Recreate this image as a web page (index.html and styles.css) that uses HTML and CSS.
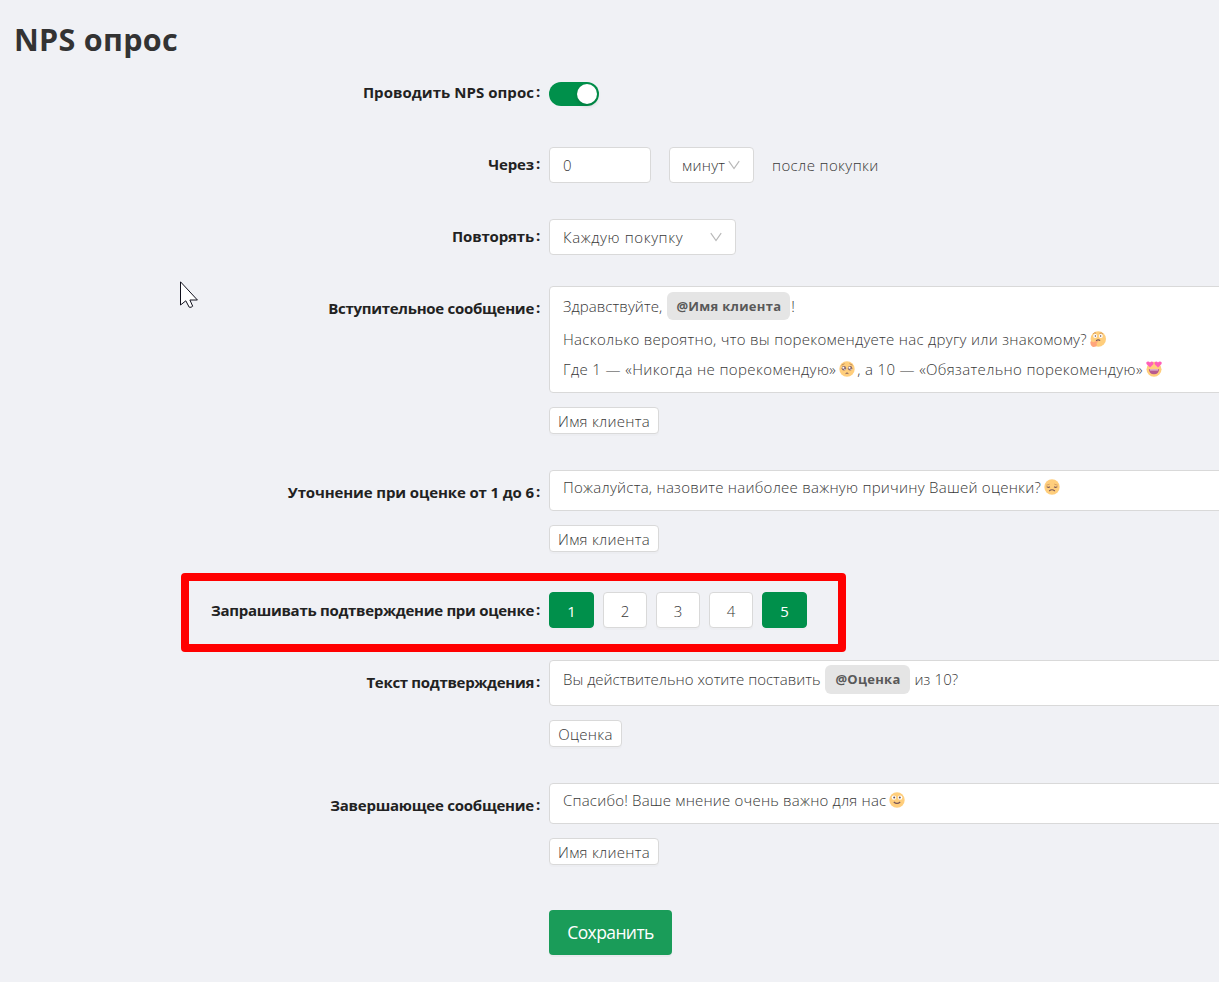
FILE: index.html
```
<!DOCTYPE html>
<html lang="ru">
<head>
  <meta charset="UTF-8" />
  <meta name="viewport" content="width=device-width, initial-scale=1" />
  <title>NPS опрос</title>
  <link rel="stylesheet" href="styles.css">
</head>
<body>

  <svg class="sprite" width="0" height="0">
    <symbol id="arrow" viewBox="0 0 12 10">
      <path d="M.8 1.200L6 8.500l5.200-7.300" fill="none" stroke="#b8b8b8" stroke-width="1.200"/>
    </symbol>
    <symbol id="thinking" viewBox="0 0 16 16">
      <circle cx="8.300" cy="8" r="7.700" fill="#ffce7c"/>
      <path d="M3.200 2.700Q4.500 1.300 6 2.100M9.500 2.300q2-1 3.500.8" fill="none" stroke="#c98a50" stroke-width=".8"/>
      <circle cx="5.200" cy="5" r="2" fill="#fff"/><circle cx="10.800" cy="5" r="2" fill="#fff"/>
      <circle cx="5.400" cy="5" r=".8" fill="#664e54"/><circle cx="10.600" cy="5" r=".8" fill="#664e54"/>
      <path d="M6 9.800q2-1.700 4.200-.3" fill="none" stroke="#765458" stroke-width="1.100"/>
      <path d="M.3 11.500q.2-2 1.800-1l1 .8 4.300-1.500q1.300.1.500 1.200l-1.400 1q1.500 3.500-2.600 4-3.200-.2-3.600-4.500z" fill="#ffa57c"/>
    </symbol>
    <symbol id="pleading" viewBox="0 0 16 16">
      <circle cx="8" cy="8" r="7.700" fill="#ffce7c"/>
      <path d="M2.500 4.200l3-1.500M10.500 2.700l3 1.500" stroke="#b88255" stroke-width=".9"/>
      <circle cx="4.900" cy="7.300" r="2.200" fill="#8a686a"/><circle cx="11.100" cy="7.300" r="2.200" fill="#8a686a"/>
      <circle cx="4.300" cy="6.700" r="1" fill="#fff"/><circle cx="10.500" cy="6.700" r="1" fill="#fff"/>
      <circle cx="5.900" cy="8.300" r=".6" fill="#fff"/><circle cx="12.100" cy="8.300" r=".6" fill="#fff"/>
      <path d="M6.600 12.600q1.400-1.300 2.800 0" fill="none" stroke="#765458"/>
    </symbol>
    <symbol id="hearts" viewBox="0 0 16 16">
      <circle cx="8" cy="8.200" r="7.500" fill="#ffce7c"/>
      <path d="M4 6.500L.5 3Q-.3.600 1.800.4 3.200.2 4 1.600 5.200.2 6.600.7q1.500 1 .5 2.700zM12 6.500L8.900 3.400q-1-1.700.5-2.700 1.400-.5 2.600.9.800-1.400 2.200-1.200 2.100.2 1.300 2.600z" fill="#ff5fb8"/>
      <path d="M2.800 8.300h10.400q-.4 4.900-5.200 5-4.800-.1-5.200-5z" fill="#b85a8e"/>
      <path d="M4 8.300h8v1.200H4z" fill="#e7c6df"/>
    </symbol>
    <symbol id="sad" viewBox="0 0 16 16">
      <circle cx="8" cy="8" r="7.700" fill="#ffce7c"/>
      <path d="M2.300 6.200l3.400-1M10.300 5.200l3.400 1" stroke="#c48c58" stroke-width=".7"/>
      <path d="M2.700 7.700q1.500 1.300 3.200 0M10.100 7.700q1.700 1.300 3.200 0M5.200 12q2.800-2.400 5.600 0" fill="none" stroke="#765458" stroke-width="1.100"/>
    </symbol>
    <symbol id="smile" viewBox="0 0 16 16">
      <circle cx="8" cy="8" r="7.700" fill="#ffce7c"/>
      <circle cx="4.900" cy="5.600" r="2.200" fill="#fff"/><circle cx="11.100" cy="5.600" r="2.200" fill="#fff"/>
      <circle cx="5.200" cy="5.600" r="1" fill="#664e54"/><circle cx="10.800" cy="5.600" r="1" fill="#664e54"/>
      <path d="M4.800 10q3.200 2.700 6.400 0" fill="none" stroke="#765458" stroke-width="1.200"/>
    </symbol>
  </svg>

  <h1>NPS опрос</h1>

  <form class="nps-form">
    <div class="row">
      <div class="label"><span class="l1">Проводить NPS опрос</span></div>
      <div class="control"><div class="switch"></div></div>
    </div>

    <div class="row">
      <div class="label"><span class="l2">Через</span></div>
      <div class="control">
        <div class="input delay">0</div>
        <div class="input unit"><span>минут</span><svg class="arrow"><use href="#arrow"/></svg></div>
        <span class="after">после покупки</span>
      </div>
    </div>

    <div class="row">
      <div class="label"><span class="l3">Повторять</span></div>
      <div class="control">
        <div class="input repeat"><span>Каждую покупку</span><svg class="arrow"><use href="#arrow"/></svg></div>
      </div>
    </div>

    <div class="row message intro">
      <div class="label"><span class="l4">Вступительное сообщение</span></div>
      <div class="field">
        <div class="editor">
          <p class="with-tag first"><span class="t1">Здравствуйте,</span><b class="mention name">@Имя клиента</b><span>!</span></p>
          <p><span class="t2">Насколько вероятно, что вы порекомендуете нас другу или знакомому?</span><svg class="emoji"><use href="#thinking"/></svg></p>
          <p><span class="t3">Где 1 — «Никогда не порекомендую»</span><svg class="emoji"><use href="#pleading"/></svg><span class="t4">, а 10 — «Обязательно порекомендую»</span><svg class="emoji"><use href="#hearts"/></svg></p>
        </div>
        <div class="tag">Имя клиента</div>
      </div>
    </div>

    <div class="row message">
      <div class="label"><span class="l5">Уточнение при оценке от 1 до 6</span></div>
      <div class="field">
        <div class="editor single">
          <p><span class="t5">Пожалуйста, назовите наиболее важную причину Вашей оценки?</span><svg class="emoji"><use href="#sad"/></svg></p>
        </div>
        <div class="tag">Имя клиента</div>
      </div>
    </div>

    <div class="row scores">
      <div class="label"><span class="l6">Запрашивать подтверждение при оценке</span></div>
      <div class="control">
        <div class="score active">1</div>
        <div class="score">2</div>
        <div class="score">3</div>
        <div class="score">4</div>
        <div class="score active">5</div>
      </div>
      <div class="highlight"></div>
    </div>

    <div class="row message confirm">
      <div class="label"><span class="l7">Текст подтверждения</span></div>
      <div class="field">
        <div class="editor">
          <p class="with-tag"><span class="t6">Вы действительно хотите поставить</span><b class="mention mark">@Оценка</b><span class="t7">из 10?</span></p>
        </div>
        <div class="tag short">Оценка</div>
      </div>
    </div>

    <div class="row message">
      <div class="label"><span class="l8">Завершающее сообщение</span></div>
      <div class="field">
        <div class="editor single">
          <p><span class="t8">Спасибо! Ваше мнение очень важно для нас</span><svg class="emoji"><use href="#smile"/></svg></p>
        </div>
        <div class="tag">Имя клиента</div>
      </div>
    </div>

    <button type="button" class="save">Сохранить</button>
  </form>

  <svg class="cursor" viewBox="0 0 20 28">
    <path d="M.5.800v23.200l5.300-4.200 3.400 6.400q2 .6 3.500-1l-2.800-6.200h7.500z" fill="#fff" stroke="#10101c"/>
  </svg>

</body>
</html>
```
FILE: styles.css
```
* {
  margin: 0;
  padding: 0;
  box-sizing: border-box;
}
body {
  height: 982px;
  overflow: hidden;
  background-color: #f0f1f5;
  font-family: "Open Sans", "Noto Sans", sans-serif;
  font-size: 15px;
  font-weight: 300;
  color: #383838;
}
.sprite {
  position: absolute;
}
h1 {
  height: 75px;
  padding: 17px 0 0 14px;
  font-size: 30.5px;
  line-height: 44px;
  font-weight: 700;
  letter-spacing: 0.3px;
  color: #333;
}
.row {
  display: flex;
  position: relative;
  margin-bottom: 36px;
}
.label {
  width: 549px;
  height: 36px;
  flex: none;
  display: flex;
  justify-content: flex-end;
  padding-right: 8px;
  line-height: 35px;
  font-weight: 700;
  color: #222;
  white-space: nowrap;
}
.label::after {
  content: ":";
  width: 5px;
  margin-left: 2px;
  line-height: 33px;
}
.control {
  display: flex;
  align-items: center;
  height: 36px;
}
.switch {
  width: 50px;
  height: 24px;
  margin-top: 2px;
  padding: 2px;
  border-radius: 12px;
  background-color: #00904b;
}
.switch::after {
  content: "";
  display: block;
  width: 20px;
  height: 20px;
  margin-left: auto;
  border-radius: 50%;
  background-color: #fff;
  box-shadow: 0 2px 4px rgba(0, 35, 11, 0.2);
}
.input {
  display: flex;
  align-items: center;
  justify-content: space-between;
  height: 36px;
  padding: 0 13px 1px;
  border: 1px solid #d9d9d9;
  border-radius: 4px;
  background-color: #fff;
  white-space: nowrap;
}
.delay {
  width: 102px;
  margin-right: 18px;
}
.unit {
  width: 85px;
  margin-right: 18px;
  padding-left: 12px;
  letter-spacing: 0.3px;
}
.repeat {
  width: 187px;
  letter-spacing: 0.6px;
}
.arrow {
  width: 12px;
  height: 10px;
  flex: none;
}
.after {
  letter-spacing: 0.38px;
}
.message {
  margin-top: 0;
}
.message .label {
  height: 41px;
  padding-top: 5px;
}
.intro {
  margin-top: -5px;
}
.confirm {
  margin-top: -4px;
}
.field {
  flex: none;
  width: 700px;
}
.editor {
  padding: 2px 13px 7px;
  border: 1px solid #d9d9d9;
  border-radius: 4px;
  background-color: #fff;
}
.single {
  padding: 1px 13px 8px;
}
.intro .editor {
  padding-bottom: 8px;
}
.editor p {
  display: flex;
  align-items: center;
  height: 30px;
  white-space: pre;
}
.editor .with-tag {
  height: 35px;
  padding-bottom: 3px;
}
.editor .first {
  padding-bottom: 1px;
}
.mention {
  height: 28px;
  margin: 0 1px 0 5px;
  border-radius: 6px;
  background-color: #e5e5e5;
  color: #595959;
  font-size: 13px;
  line-height: 28px;
  font-weight: 700;
  letter-spacing: 0.28px;
  text-align: center;
}
.name {
  width: 123px;
}
.mark {
  width: 85px;
  height: 29px;
  margin-right: 4px;
  line-height: 29px;
}
.emoji {
  width: 16px;
  height: 16px;
  flex: none;
  margin: 0 2px 0 3px;
}
.tag {
  width: 110px;
  height: 27px;
  margin-top: 14px;
  border: 1px solid #d9d9d9;
  border-radius: 4px;
  background-color: #fff;
  box-shadow: 0 2px 0 rgba(0, 0, 0, 0.016);
  line-height: 27px;
  letter-spacing: 0.27px;
  text-align: center;
}
.short {
  width: 73px;
}
.scores {
  margin-top: 40px;
}
.scores .label {
  padding-top: 1px;
}
.scores .control {
  gap: 9px;
}
.score {
  width: 44px;
  height: 36px;
  border: 1px solid #d9d9d9;
  border-radius: 4px;
  background-color: #fff;
  box-shadow: 0 2px 0 rgba(0, 0, 0, 0.016);
  line-height: 36px;
  text-align: center;
}
.score.active {
  width: 45px;
  border-color: #00904b;
  background-color: #00904b;
  color: #fff;
  font-weight: 400;
}
/* red frame laid over the form */
.highlight {
  position: absolute;
  left: 181px;
  top: -19px;
  width: 665px;
  height: 79px;
  border: 8px solid #f00;
  border-radius: 4px;
}
.save {
  display: block;
  width: 123px;
  height: 45px;
  margin: 45px 0 0 549px;
  padding-bottom: 2px;
  border: none;
  border-radius: 4px;
  background-color: #1a9c59;
  box-shadow: 0 2px 0 rgba(0, 0, 0, 0.03);
  font-family: inherit;
  font-size: 17.5px;
  letter-spacing: -0.6px;
  color: #fff;
}
.cursor {
  position: absolute;
  left: 180px;
  top: 281px;
  width: 20px;
  height: 28px;
}

/* letter spacing per text */
.l1 { letter-spacing: 0.05px; }
.l2 { letter-spacing: -0.15px; }
.l3 { letter-spacing: -0.15px; }
.l4 { letter-spacing: -0.27px; }
.l5 { letter-spacing: -0.12px; }
.l6 { letter-spacing: -0.29px; }
.l7 { letter-spacing: -0.31px; }
.l8 { letter-spacing: -0.23px; }
.t1 { letter-spacing: 0.08px; }
.t2 { letter-spacing: 0.29px; }
.t3 { letter-spacing: 0.38px; }
.t4 { letter-spacing: 0.35px; }
.t5 { letter-spacing: 0.26px; }
.t7 { letter-spacing: 0.1px; }
.t8 { letter-spacing: 0.2px; }
```
